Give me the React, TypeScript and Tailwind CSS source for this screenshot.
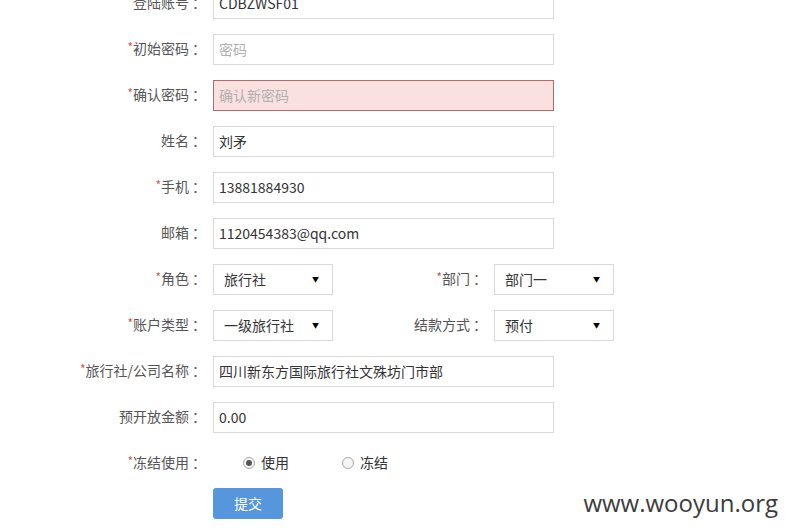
import React from 'react';

const FONT = '"Noto Sans CJK SC", "Noto Sans", sans-serif';

const Label: React.FC<{ text: string; required?: boolean; width?: string }> = ({ text, required, width = 'w-[206px]' }) => (
    <div className={`${width} shrink-0 mb-[3px] text-right text-[14px] text-[#555] leading-none whitespace-nowrap`}>
        {required && <span className="text-[#d9534f] text-[12px] align-top">*</span>}
        {text}
        <span className="ml-[3px]">：</span>
    </div>
);

const TextInput: React.FC<{ value?: string; placeholder?: string; error?: boolean }> = ({ value, placeholder, error }) => (
    <div
        className={`ml-[7px] w-[341px] h-[31px] flex items-center px-[5px] border text-[14px] ${
            error ? 'bg-[#fbe0e0] border-[#b36a68]' : 'bg-white border-[#d9d9d9]'
        } ${value ? 'text-[#333]' : 'text-[#b0b0b0]'}`}
    >
        {value ?? placeholder}
    </div>
);

const Select: React.FC<{ value: string }> = ({ value }) => (
    <div className="ml-[7px] w-[120px] h-[31px] flex items-center justify-between pl-[10px] pr-[13px] border border-[#d9d9d9] bg-white text-[14px] text-[#333]">
        <span>{value}</span>
        <span className="text-[7px] text-black">▼</span>
    </div>
);

const Radio: React.FC<{ label: string; checked?: boolean }> = ({ label, checked }) => (
    <div className="flex items-center gap-[6px] text-[14px] text-[#333]">
        <span className="w-[12px] h-[12px] rounded-full border border-[#a9a9a9] bg-[#f4f4f4] flex items-center justify-center">
            {checked && <span className="w-[6px] h-[6px] rounded-full bg-[#555]" />}
        </span>
        {label}
    </div>
);

const Row: React.FC<{ children: React.ReactNode }> = ({ children }) => (
    <div className="flex items-center h-[31px]">{children}</div>
);

export default function App() {
    return (
        <div className="relative w-[788px] h-[529px] overflow-hidden bg-white" style={{ fontFamily: FONT }}>
            <div className="flex flex-col gap-[15px] mt-[-12px]">
                <Row><Label text="登陆账号" required /><TextInput value="CDBZWSF01" /></Row>
                <Row><Label text="初始密码" required /><TextInput placeholder="密码" /></Row>
                <Row><Label text="确认密码" required /><TextInput placeholder="确认新密码" error /></Row>
                <Row><Label text="姓名" /><TextInput value="刘矛" /></Row>
                <Row><Label text="手机" required /><TextInput value="13881884930" /></Row>
                <Row><Label text="邮箱" /><TextInput value="1120454383@qq.com" /></Row>
                <Row>
                    <Label text="角色" required />
                    <Select value="旅行社" />
                    <Label text="部门" required width="w-[154px]" />
                    <Select value="部门一" />
                </Row>
                <Row>
                    <Label text="账户类型" required />
                    <Select value="一级旅行社" />
                    <Label text="结款方式" width="w-[154px]" />
                    <Select value="预付" />
                </Row>
                <Row><Label text="旅行社/公司名称" required /><TextInput value="四川新东方国际旅行社文殊坊门市部" /></Row>
                <Row><Label text="预开放金额" /><TextInput value="0.00" /></Row>
                <Row>
                    <Label text="冻结使用" required />
                    <div className="ml-[37px] mt-[-2px] flex items-center gap-[53px]">
                        <Radio label="使用" checked />
                        <Radio label="冻结" />
                    </div>
                </Row>
            </div>
            <div className="ml-[213px] mt-[9px]">
                <button className="w-[70px] h-[31px] rounded-[3px] bg-[#5596dd] text-white text-[14px]">提交</button>
            </div>
            <div
                className="absolute right-[10px] bottom-[14px] text-[24px] leading-none text-[#3c3c3c]"
                style={{ fontFamily: '"Open Sans", "DejaVu Sans", sans-serif', textShadow: '0 0 3px #fff' }}
            >
                www.wooyun.org
            </div>
        </div>
    );
}
